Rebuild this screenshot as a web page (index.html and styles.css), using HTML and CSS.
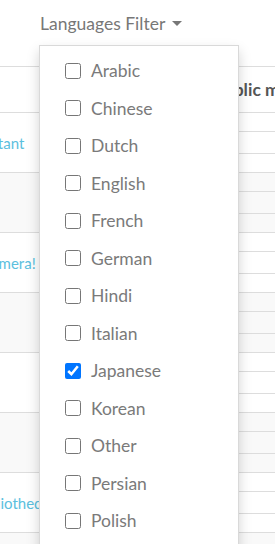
FILE: index.html
```html
<!DOCTYPE html>
<html>
<head>
<meta charset="utf-8">
<link rel="stylesheet" href="styles.css">
</head>
<body>
<div class="page">
  <div class="table-wrap">
    <div class="table">
      <div class="thead">
        <div class="c1"></div>
        <div class="c2 th">Public media</div>
      </div>
      <div class="row odd">
        <div class="c1"><a class="lnk">Important</a></div>
        <div class="c2"><div class="sub"></div><div class="sub tall"></div><div class="sub"></div></div>
      </div>
      <div class="row even">
        <div class="c1"></div>
        <div class="c2"><div class="sub"></div><div class="sub tall"></div><div class="sub"></div></div>
      </div>
      <div class="row odd">
        <div class="c1"><a class="lnk">My camera!</a></div>
        <div class="c2"><div class="sub"></div><div class="sub tall"></div><div class="sub"></div></div>
      </div>
      <div class="row even">
        <div class="c1"></div>
        <div class="c2"><div class="sub"></div><div class="sub tall"></div><div class="sub"></div></div>
      </div>
      <div class="row odd">
        <div class="c1"></div>
        <div class="c2"><div class="sub"></div><div class="sub tall"></div><div class="sub"></div></div>
      </div>
      <div class="row even">
        <div class="c1"></div>
        <div class="c2"><div class="sub"></div><div class="sub tall"></div><div class="sub"></div></div>
      </div>
      <div class="row odd">
        <div class="c1"><a class="lnk">Al bibliotheque</a></div>
        <div class="c2"><div class="sub"></div><div class="sub tall"></div><div class="sub"></div></div>
      </div>
      <div class="row even last">
        <div class="c1"></div>
        <div class="c2"><div class="sub"></div><div class="sub tall"></div><div class="sub"></div></div>
      </div>
    </div>
  </div>

  <div class="filter">
    <button class="toggle">Languages Filter <span class="caret"></span></button>
    <ul class="menu">
      <li><label><input type="checkbox"> Arabic</label></li>
      <li><label><input type="checkbox"> Chinese</label></li>
      <li><label><input type="checkbox"> Dutch</label></li>
      <li><label><input type="checkbox"> English</label></li>
      <li><label><input type="checkbox"> French</label></li>
      <li><label><input type="checkbox"> German</label></li>
      <li><label><input type="checkbox"> Hindi</label></li>
      <li><label><input type="checkbox"> Italian</label></li>
      <li><label><input type="checkbox" checked> Japanese</label></li>
      <li><label><input type="checkbox"> Korean</label></li>
      <li><label><input type="checkbox"> Other</label></li>
      <li><label><input type="checkbox"> Persian</label></li>
      <li><label><input type="checkbox"> Polish</label></li>
      <li><label><input type="checkbox"> Portuguese</label></li>
    </ul>
  </div>
</div>
</body>
</html>
```

FILE: styles.css
```css
html, body {
  margin: 0;
  padding: 0;
  background: #fff;
  font-family: Lato, "Open Sans", sans-serif;
  overflow: hidden;
}

.page {
  position: relative;
  width: 275px;
  height: 544px;
  overflow: hidden;
}

.table-wrap {
  padding-top: 66px;
  overflow: hidden;
}

.table {
  margin-left: -49px;
  border-top: 1px solid #ddd;
}

.thead, .row {
  display: flex;
}

.thead {
  height: 45px;
}

.row {
  height: 59px;
  border-top: 1px solid #ddd;
}

.row.last {
  border-bottom: 1px solid #ddd;
}

.even {
  background: #f9f9f9;
}

.c1 {
  width: 257px;
  flex: none;
  display: flex;
  align-items: center;
  padding-left: 8px;
  box-sizing: border-box;
}

.c2 {
  flex: 1;
  display: flex;
  flex-direction: column;
}

.th {
  justify-content: center;
  font-weight: 700;
  font-size: 17.5px;
  color: #555;
  white-space: nowrap;
  padding-left: 5px;
}

.sub {
  height: 18px;
  border-bottom: 1px solid #ddd;
}

.sub.tall {
  height: 22px;
}

.sub:last-child {
  border-bottom: none;
}

.lnk {
  color: #5bc0de;
  font-size: 15px;
  white-space: nowrap;
  text-decoration: none;
}

.filter {
  position: absolute;
  left: 39px;
  top: 10px;
}

.toggle {
  border: none;
  background: none;
  padding: 0 0 0 1px;
  font-family: Lato, sans-serif;
  font-size: 17.5px;
  color: #777;
  height: 26px;
  display: flex;
  align-items: center;
  gap: 7px;
  cursor: pointer;
}

.caret {
  display: inline-block;
  width: 0;
  height: 0;
  border-top: 5px solid #777;
  border-left: 5px solid transparent;
  border-right: 5px solid transparent;
  margin-top: 1px;
}

.menu {
  list-style: none;
  margin: 9px 0 0 0;
  padding: 6px 0;
  width: 198px;
  background: #fff;
  border: 1px solid rgba(0, 0, 0, 0.15);
  box-shadow: 0 6px 12px rgba(0, 0, 0, 0.175);
}

.menu li {
  height: 37.5px;
  display: flex;
  align-items: center;
}

.menu label {
  display: flex;
  align-items: center;
  gap: 10px;
  padding-left: 25px;
  font-size: 17.5px;
  color: #7a7a7a;
}

.menu input {
  width: 16px;
  height: 16px;
  margin: 0;
}
```
